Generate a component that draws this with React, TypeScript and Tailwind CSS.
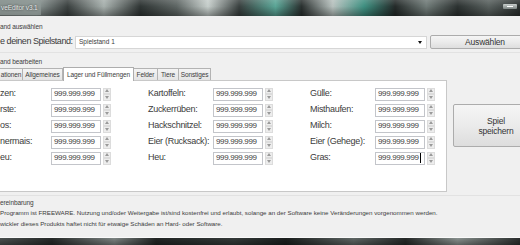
import React from "react";

const TABS = [
  { label: "ationen", w: "w-[23px]", active: false },
  { label: "Allgemeines", w: "w-[40px]", active: false },
  { label: "Lager und Füllmengen", w: "w-[71px]", active: true },
  { label: "Felder", w: "w-[24px]", active: false },
  { label: "Tiere", w: "w-[21px]", active: false },
  { label: "Sonstiges", w: "w-[32px]", active: false },
];

const COLUMNS = [
  { labelW: "w-[51px]", items: ["zen:", "rste:", "os:", "nermais:", "eu:"] },
  { labelW: "w-[65px]", items: ["Kartoffeln:", "Zuckerrüben:", "Hackschnitzel:", "Eier (Rucksack):", "Heu:"] },
  { labelW: "w-[65px]", items: ["Gülle:", "Misthaufen:", "Milch:", "Eier (Gehege):", "Gras:"] },
];

function Spinner() {
  return (
    <div className="ml-[2px] flex h-[13px] w-[8px] shrink-0 flex-col">
      {[0, 1].map(i => (
        <div key={i} className="flex h-[6.5px] items-center justify-center border border-[#dcdcdc] bg-[#ededed]">
          <svg width="4" height="3" viewBox="0 0 4 3">
            <path d={i === 0 ? "M0 3 L2 0 L4 3 Z" : "M0 0 L2 3 L4 0 Z"} fill="#9a9a9a" />
          </svg>
        </div>
      ))}
    </div>
  );
}

function NumField({ label, labelW, caret }: { label: string; labelW: string; caret?: boolean }) {
  return (
    <div className="flex h-[16px] items-center">
      <span className={`${labelW} shrink-0 whitespace-nowrap text-[9px] tracking-[-0.3px] text-[#3c3c3c]`}>{label}</span>
      <div className="flex h-[13px] w-[50px] shrink-0 items-center overflow-hidden whitespace-nowrap border border-[#c3c5ca] bg-white pl-[2px] text-[8px] tracking-[-0.35px] text-[#3c3c3c]">
        999.999.999
        {caret && <span className="ml-px h-[10px] w-px bg-black" />}
      </div>
      <Spinner />
    </div>
  );
}

export default function App() {
  return (
    <div className="flex h-[245px] w-[520px] flex-col overflow-hidden bg-[#f0f0f0] font-['Liberation_Sans',Arial,sans-serif] text-[#3c3c3c]">
      {/* title bar */}
      <div className="flex h-[16px] shrink-0 items-start justify-between bg-[linear-gradient(180deg,rgba(255,255,255,0.15)_0%,rgba(0,0,0,0)_40%,rgba(0,0,0,0.35)_100%),linear-gradient(90deg,#7d8785_0%,#8e9896_7%,#3b4140_13%,#a7b0ad_20%,#2f3534_27%,#5e6664_34%,#c6cecb_40%,#39403f_46%,#5aa596_53%,#2a302f_58%,#b7c1be_64%,#3e8f80_70%,#242a29_76%,#6f7a77_82%,#2c3231_88%,#58605e_94%,#2a2f2e_100%)]">
        <div className="flex h-[15px] w-[41px] items-center whitespace-nowrap bg-[#8f9996]/70 pl-[1px] text-[6.5px] tracking-[-0.1px] text-[#e6eae9] [text-shadow:0_0_2px_#222]">
          veEditor v3.1
        </div>
        <div className="mr-[3px] mt-[4px] h-[5px] w-[14px] rounded-[1px] bg-[linear-gradient(180deg,#c9cfcd,#7c8482)]">
          <div className="mx-auto mt-[2px] h-px w-[6px] bg-white" />
        </div>
      </div>

      <div className="mt-[7px] h-[8px] text-[6.5px] leading-[8px] tracking-[-0.1px]">and auswählen</div>

      <div className="mt-[4px] flex h-[14px] items-center">
        <span className="w-[75px] shrink-0 whitespace-nowrap text-[9px] tracking-[-0.45px]">e deinen Spielstand:</span>
        <div className="flex h-[13px] w-[352px] shrink-0 items-center justify-between border border-[#d6d6d6] bg-white pl-[3px] pr-[3px] text-[6.5px]">
          <span>Spielstand 1</span>
          <svg width="4" height="3" viewBox="0 0 4 3" className="mr-[1px]">
            <path d="M0 0 L2 3 L4 0 Z" fill="#111" />
          </svg>
        </div>
        <button className="ml-[3px] h-[14px] w-[110px] shrink-0 rounded-[2px] border border-[#acacac] bg-[linear-gradient(180deg,#f5f5f5_0%,#ebebeb_50%,#dedede_100%)] text-[8.5px] tracking-[-0.2px] text-[#333]">
          Auswählen
        </button>
      </div>

      <div className="mt-[3px] h-px w-full bg-[#e2e2e2]" />

      <div className="mt-[5px] h-[8px] text-[6.5px] leading-[8px] tracking-[-0.1px]">and bearbeiten</div>

      {/* tabs */}
      <div className="relative z-10 mt-px flex h-[13px] items-end">
        {TABS.map(t => (
          <div
            key={t.label}
            className={
              t.active
                ? `${t.w} -mb-px flex h-[14px] items-center justify-center border border-b-0 border-[#adadad] bg-white text-[6.5px] tracking-[-0.1px] whitespace-nowrap`
                : `${t.w} flex h-[12px] items-center justify-center border border-b-0 border-l-0 border-[#b3b3b3] bg-[linear-gradient(180deg,#f4f4f4,#e4e4e4)] text-[6.5px] tracking-[-0.1px] whitespace-nowrap`
            }
          >
            {t.label}
          </div>
        ))}
      </div>

      <div className="flex h-[112px] shrink-0">
        <div className="flex h-[112px] w-[447px] shrink-0 gap-[37px] border-r border-b border-t border-[#c8c8c8] bg-white pt-[5px]">
          {COLUMNS.map((c, ci) => (
            <div key={ci} className="flex flex-col">
              {c.items.map((label, i) => (
                <NumField key={label} label={label} labelW={c.labelW} caret={ci === 2 && i === 4} />
              ))}
            </div>
          ))}
        </div>
        <div className="pl-[6px] pt-[24px]">
          <button className="flex h-[43px] w-[86px] flex-col items-center justify-center rounded-[2px] border border-[#acacac] bg-[linear-gradient(180deg,#f5f5f5_0%,#ebebeb_50%,#dddddd_100%)] text-[8.5px] leading-[10px] tracking-[-0.2px] text-[#333]">
            <span>Spiel</span>
            <span>speichern</span>
          </button>
        </div>
      </div>

      <div className="mt-[3px] h-px w-full bg-[#e2e2e2]" />

      <div className="mt-[3px] h-[8px] text-[6.5px] leading-[8px] tracking-[-0.1px]">ereinbarung</div>
      <div className="whitespace-nowrap text-[6.2px] leading-[11px]">
        <div>Programm ist FREEWARE. Nutzung und/oder Weitergabe ist/sind kostenfrei und erlaubt, solange an der Software keine Veränderungen vorgenommen werden.</div>
        <div>wickler dieses Produkts haftet nicht für etwaige Schäden an Hard- oder Software.</div>
      </div>

      <div className="flex-1" />
      <div className="h-px w-full bg-[#fafafa]" />
      <div className="h-[7px] shrink-0 bg-[linear-gradient(180deg,rgba(0,0,0,0.1),rgba(0,0,0,0.4)),linear-gradient(90deg,#555b5a_0%,#2b2f2e_10%,#8d9593_22%,#262a29_30%,#3b4140_45%,#1f2322_55%,#6b7371_68%,#2a2e2d_78%,#9aa3a0_88%,#303433_100%)]" />
    </div>
  );
}
